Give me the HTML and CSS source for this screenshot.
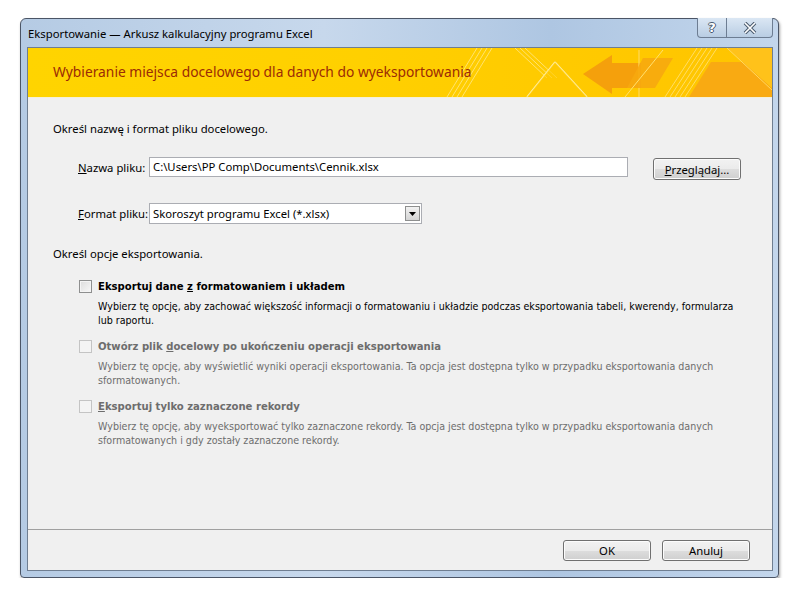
FILE: index.html
```html
<!DOCTYPE html>
<html lang="pl">
<head>
  <meta charset="UTF-8">
  <title>Eksportowanie — Arkusz kalkulacyjny programu Excel</title>
  <link rel="stylesheet" href="styles.css">
</head>
<body>

  <div class="window">
    <!-- Title bar -->
    <div class="titlebar">
      <span class="title">Eksportowanie — Arkusz kalkulacyjny programu Excel</span>
      <div class="caption-buttons">
        <div class="cap-btn help">?</div>
        <div class="cap-btn close">
          <svg width="14" height="12" viewBox="0 0 14 12">
            <path d="M2 1 L12 11 M12 1 L2 11" stroke="#4a5a6e" stroke-width="3.6"/>
            <path d="M2 1 L12 11 M12 1 L2 11" stroke="#fff" stroke-width="1.6"/>
          </svg>
        </div>
      </div>
    </div>

    <div class="client">
      <!-- Yellow banner -->
      <div class="banner">
        <span class="banner-text">Wybieranie miejsca docelowego dla danych do wyeksportowania</span>
        <svg class="banner-art" width="345" height="49" viewBox="0 0 345 49">
          <!-- light hatched streaks -->
          <g stroke="#ffe98a" stroke-width="1" opacity="0.8">
            <line x1="20" y1="49" x2="50" y2="0"/>
            <line x1="25" y1="49" x2="55" y2="0"/>
            <line x1="30" y1="49" x2="60" y2="0"/>
            <line x1="35" y1="49" x2="65" y2="0"/>
            <line x1="88" y1="0" x2="120" y2="30"/>
            <line x1="93" y1="0" x2="125" y2="30"/>
            <line x1="98" y1="0" x2="130" y2="30"/>
          </g>
          <!-- diamond lines -->
          <line x1="100" y1="49" x2="128" y2="14" stroke="#fff2b0" stroke-width="1.3"/>
          <line x1="128" y1="14" x2="160" y2="49" stroke="#fff2b0" stroke-width="1.3"/>
          <polygon points="128,14 160,49 100,49" fill="#ffc800" opacity="0.6"/>
          <!-- arrow -->
          <polygon points="156,26 185,7 185,15 214,15 214,40 185,40 185,46" fill="#f5a00c"/>
          <line x1="212" y1="2" x2="212" y2="49" stroke="#ffd75a" stroke-width="1.2"/>
          <polygon points="216,10 246,10 228,40 200,40" fill="#f7a80e" opacity="0.9"/>
          <line x1="198" y1="49" x2="236" y2="2" stroke="#ffe070" stroke-width="1"/>
          <!-- right streaks -->
          <g stroke="#ffe070" stroke-width="1" opacity="0.9">
            <line x1="238" y1="49" x2="270" y2="0"/>
            <line x1="243" y1="49" x2="275" y2="0"/>
            <line x1="248" y1="49" x2="280" y2="0"/>
            <line x1="253" y1="49" x2="285" y2="0"/>
            <line x1="258" y1="49" x2="290" y2="0"/>
          </g>
          <!-- right shapes -->
          <polygon points="262,49 284,14 318,14 345,40 345,49" fill="#f9aa12"/>
          <polygon points="300,0 345,0 345,40" fill="#ffc21a"/>
          <line x1="300" y1="0" x2="345" y2="42" stroke="#ffd860" stroke-width="1"/>
        </svg>
      </div>

      <div class="main">
        <p class="section">Określ nazwę i format pliku docelowego.</p>

        <div class="field-row name-row">
          <label class="field-label"><u>N</u>azwa pliku:</label>
          <div class="textbox">C:\Users\PP Comp\Documents\Cennik.xlsx</div>
          <button class="btn browse"><u>P</u>rzeglądaj...</button>
        </div>

        <div class="field-row format-row">
          <label class="field-label"><u>F</u>ormat pliku:</label>
          <div class="combo">
            <span>Skoroszyt programu Excel (*.xlsx)</span>
            <span class="combo-arrow">
              <svg width="7" height="4" viewBox="0 0 7 4"><polygon points="0,0 7,0 3.5,4" fill="#000"/></svg>
            </span>
          </div>
        </div>

        <p class="section options-title">Określ opcje eksportowania.</p>

        <div class="option">
          <span class="checkbox"></span>
          <div class="option-body">
            <div class="option-title">Eksportuj dane <u>z</u> formatowaniem i układem</div>
            <div class="option-desc">Wybierz tę opcję, aby zachować większość informacji o formatowaniu i układzie podczas eksportowania tabeli, kwerendy, formularza lub raportu.</div>
          </div>
        </div>

        <div class="option disabled">
          <span class="checkbox"></span>
          <div class="option-body">
            <div class="option-title">Otwórz plik <u>d</u>ocelowy po ukończeniu operacji eksportowania</div>
            <div class="option-desc">Wybierz tę opcję, aby wyświetlić wyniki operacji eksportowania. Ta opcja jest dostępna tylko w przypadku eksportowania danych sformatowanych.</div>
          </div>
        </div>

        <div class="option disabled">
          <span class="checkbox"></span>
          <div class="option-body">
            <div class="option-title"><u>E</u>ksportuj tylko zaznaczone rekordy</div>
            <div class="option-desc">Wybierz tę opcję, aby wyeksportować tylko zaznaczone rekordy. Ta opcja jest dostępna tylko w przypadku eksportowania danych sformatowanych i gdy zostały zaznaczone rekordy.</div>
          </div>
        </div>
      </div>

      <!-- Footer buttons -->
      <div class="footer">
        <button class="btn footer-btn">OK</button>
        <button class="btn footer-btn">Anuluj</button>
      </div>
    </div>
  </div>

</body>
</html>
```

FILE: styles.css
```css
/* General */
body {
  margin: 0;
  background-color: #fff;
  font-family: "Noto Sans", "Open Sans", sans-serif;
  font-size: 11.3px;
  color: #000;
}

/* Window frame */
.window {
  width: 759px;
  height: 560px;
  margin: 18px 0 0 20px;
  display: flex;
  flex-direction: column;
  box-sizing: border-box;
  border: 1px solid #4b5566;
  border-radius: 6px 6px 4px 4px;
  background: linear-gradient(90deg, #b5cbe4 0%, #c7d8ec 40%, #aec6e2 70%, #c3d6ec 100%);
  box-shadow: 1px 2px 3px rgba(0, 0, 0, 0.35);
  padding: 0 5px 6px 6px;
}

.titlebar {
  height: 28px;
  display: flex;
  justify-content: space-between;
  align-items: flex-start;
}

.title {
  padding: 7px 0 0 1px;
  font-size: 11.3px;
  color: #000;
}

.caption-buttons {
  display: flex;
  margin-top: -1px;
}

.cap-btn {
  height: 20px;
  display: flex;
  justify-content: center;
  align-items: center;
  border: 1px solid #6d7d92;
  border-top: none;
  background: linear-gradient(#dbe7f4, #b9cde3);
  box-sizing: border-box;
}

.help {
  width: 30px;
  border-radius: 0 0 0 4px;
  font-family: "DejaVu Sans", sans-serif;
  font-weight: bold;
  font-size: 13px;
  color: #fff;
  text-shadow: 1px 0 0 #4a5a6e, -1px 0 0 #4a5a6e, 0 1px 0 #4a5a6e, 0 -1px 0 #4a5a6e;
}

.close {
  width: 46px;
  border-left: none;
  border-radius: 0 0 4px 0;
}

/* Client area */
.client {
  flex: 1;
  display: flex;
  flex-direction: column;
  background-color: #f0f0f0;
  border: 1px solid #6f7e91;
}

.banner {
  height: 49px;
  position: relative;
  overflow: hidden;
  display: flex;
  align-items: center;
  background: linear-gradient(90deg, #ffd400 0%, #ffd000 45%, #ffc400 100%);
  border-bottom: 1px solid #f5f0d8;
}

.banner-text {
  padding-left: 25px;
  padding-bottom: 3px;
  font-size: 13.8px;
  color: #9b2b06;
  position: relative;
  z-index: 1;
}

.banner-art {
  position: absolute;
  right: 0;
  top: 0;
}

.main {
  flex: 1;
  padding: 0 0 0 25px;
}

.section {
  margin: 0;
}

.main > .section:first-child {
  margin-top: 23px;
}

.field-row {
  display: flex;
  align-items: center;
}

.name-row {
  margin-top: 18px;
}

.format-row {
  margin-top: 23px;
}

.field-label {
  width: 71px;
  padding-left: 25px;
  flex-shrink: 0;
  white-space: nowrap;
}

.textbox {
  width: 479px;
  height: 20px;
  box-sizing: border-box;
  border: 1px solid #abadb3;
  background: #fff;
  padding: 1px 3px;
  line-height: 16px;
}

.combo {
  width: 273px;
  height: 21px;
  box-sizing: border-box;
  border: 1px solid #abadb3;
  background: #fff;
  padding-left: 3px;
  display: flex;
  justify-content: space-between;
  align-items: center;
}

.combo-arrow {
  width: 15px;
  height: 15px;
  margin-right: 1px;
  box-sizing: border-box;
  border: 1px solid #8e8f8f;
  background: linear-gradient(#f2f2f2, #d4d4d4);
  display: flex;
  justify-content: center;
  align-items: center;
}

.btn {
  font-family: "Noto Sans", "Open Sans", sans-serif;
  font-size: 11.3px;
  color: #000;
  border: 1px solid #707070;
  border-radius: 3px;
  background: linear-gradient(#f2f2f2 0%, #ebebeb 50%, #dddddd 51%, #cfcfcf 100%);
  padding: 0;
  box-shadow: inset 0 0 0 1px #fcfcfc;
}

.browse {
  width: 88px;
  height: 22px;
  margin-left: 25px;
  margin-top: 4px;
}

.options-title {
  margin-top: 22px;
}

.option {
  display: flex;
  margin-top: 18px;
  padding-left: 26px;
}

.option + .option {
  margin-top: 12px;
}

.checkbox {
  width: 13px;
  height: 13px;
  box-sizing: border-box;
  margin-top: 1px;
  border: 1px solid #8e8f8f;
  background: linear-gradient(135deg, #dcdcdc, #f8f8f8);
  box-shadow: inset 0 0 0 1px #f4f4f4;
  flex-shrink: 0;
}

.option-body {
  padding-left: 6px;
}

.option-title {
  font-family: "DejaVu Sans Condensed", "DejaVu Sans", sans-serif;
  font-weight: bold;
  font-size: 11.2px;
  line-height: 15px;
}

.option-desc {
  margin-top: 5px;
  font-family: "DejaVu Sans Condensed", "DejaVu Sans", sans-serif;
  font-size: 10.6px;
  line-height: 14px;
  width: 645px;
}

.disabled .option-title,
.disabled .option-desc {
  color: #6d6d6d;
}

.disabled .checkbox {
  border-color: #c4c4c4;
  background: #f4f4f4;
  box-shadow: none;
}

.footer {
  height: 40px;
  border-top: 1px solid #a0a0a0;
  display: flex;
  justify-content: flex-end;
  align-items: center;
  padding-right: 22px;
  gap: 11px;
}

.footer-btn {
  width: 88px;
  height: 21px;
}
```
